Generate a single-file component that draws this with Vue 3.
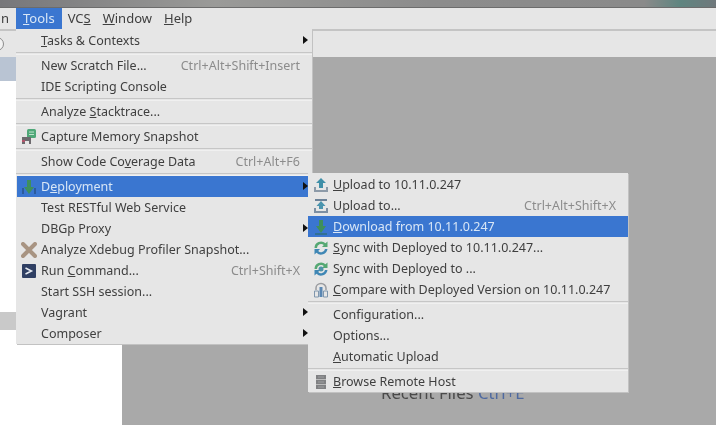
<script setup>
const topMenus = [
  { pre: '', key: 'T', post: 'ools', active: true },
  { pre: 'VC', key: 'S', post: '' },
  { pre: '', key: 'W', post: 'indow' },
  { pre: '', key: 'H', post: 'elp' }
]

const toolsMenu = [
  { pre: '', key: 'T', post: 'asks & Contexts', arrow: true },
  { sep: true },
  { post: 'New Scratch File...', hint: 'Ctrl+Alt+Shift+Insert' },
  { post: 'IDE Scripting Console' },
  { sep: true },
  { pre: 'Analyze ', key: 'S', post: 'tacktrace...' },
  { sep: true },
  { post: 'Capture Memory Snapshot', icon: 'capture' },
  { sep: true },
  { pre: 'Show Code Co', key: 'v', post: 'erage Data', hint: 'Ctrl+Alt+F6' },
  { sep: true },
  { pre: 'D', key: 'e', post: 'ployment', icon: 'deploy', arrow: true, active: true },
  { post: 'Test RESTful Web Service' },
  { post: 'DBGp Proxy', arrow: true },
  { post: 'Analyze Xdebug Profiler Snapshot...', icon: 'xdebug' },
  { pre: 'Run ', key: 'C', post: 'ommand...', icon: 'run', hint: 'Ctrl+Shift+X' },
  { post: 'Start SSH session...' },
  { post: 'Vagrant', arrow: true },
  { post: 'Composer', arrow: true }
]

const deployMenu = [
  { pre: '', key: 'U', post: 'pload to 10.11.0.247', icon: 'upload' },
  { post: 'Upload to...', icon: 'uploadTo', hint: 'Ctrl+Alt+Shift+X' },
  { pre: '', key: 'D', post: 'ownload from 10.11.0.247', icon: 'download', active: true },
  { pre: '', key: 'S', post: 'ync with Deployed to 10.11.0.247...', icon: 'sync' },
  { post: 'Sync with Deployed to ...', icon: 'sync2' },
  { pre: '', key: 'C', post: 'ompare with Deployed Version on 10.11.0.247', icon: 'compare' },
  { sep: true },
  { post: 'Configuration...' },
  { post: 'Options...' },
  { pre: '', key: 'A', post: 'utomatic Upload' },
  { sep: true },
  { pre: '', key: 'B', post: 'rowse Remote Host', icon: 'server' }
]

const menus = [
  { id: 'tools', items: toolsMenu },
  { id: 'deploy', items: deployMenu }
]
</script>

<template>
  <div class="screen">
    <div class="title-strip"></div>
    <div class="menubar">
      <span class="cut">n</span>
      <span v-for="m in topMenus" :key="m.pre + m.post" class="top-item" :class="{ active: m.active }">{{ m.pre }}<u>{{ m.key }}</u>{{ m.post }}</span>
    </div>
    <div class="toolbar"><span class="round-btn"></span></div>
    <div class="body">
      <div class="left-panel">
        <div class="panel-head"></div>
        <div class="panel-white"></div>
        <div class="panel-tab"></div>
      </div>
      <div class="editor">
        <div class="recent">Recent Files <span class="shortcut">Ctrl+E</span></div>
      </div>
    </div>

    <div v-for="menu in menus" :key="menu.id" class="menu" :class="menu.id">
      <template v-for="(item, i) in menu.items" :key="i">
        <div v-if="item.sep" class="sep"></div>
        <div v-else class="row" :class="{ active: item.active }">
          <span class="icon">
            <svg v-if="item.icon === 'capture'" width="16" height="16" viewBox="0 0 16 16">
              <rect x="6" y="0" width="9" height="9" rx="1.5" fill="#4fa878" />
              <path d="M8 3h5M8 5.500h5" stroke="#bfe3cd" />
              <path d="M1 8h9v7H8v-3H4v3H1z" fill="#6d6a6e" />
              <rect x="1" y="11" width="3" height="2" fill="#b0546a" />
            </svg>
            <svg v-else-if="item.icon === 'deploy'" width="16" height="16" viewBox="0 0 16 16">
              <path d="M2 9v6M14 9v6" stroke="#2c5c9c" stroke-width="2" />
              <path d="M6 1h4v7h3l-5 7-5-7h3z" fill="#3f8f5c" />
            </svg>
            <svg v-else-if="item.icon === 'xdebug'" width="16" height="16" viewBox="0 0 16 16">
              <path d="M2 2l12 12M14 2L2 14" stroke="#a89482" stroke-width="4" stroke-linecap="round" />
            </svg>
            <svg v-else-if="item.icon === 'run'" width="16" height="16" viewBox="0 0 16 16">
              <rect x="1" y="1" width="14" height="14" rx="1" fill="#2f3f63" />
              <path d="M4.500 5l6 3-6 3" fill="none" stroke="#e8ecf2" stroke-width="1.500" />
            </svg>
            <svg v-else-if="item.icon === 'upload'" width="16" height="16" viewBox="0 0 16 16">
              <path d="M8 1l5 5h-3v5H6V6H3z" fill="#3f8fa8" />
              <path d="M1 10v5h14v-5h-2v3H3v-3z" fill="#8c9aa8" />
            </svg>
            <svg v-else-if="item.icon === 'uploadTo'" width="16" height="16" viewBox="0 0 16 16">
              <path d="M2 1h12v2H2z" fill="#6c8298" />
              <path d="M8 3l4.500 5H10v3H6V8H3.500z" fill="#4a94ae" />
              <path d="M1 10v5h14v-5h-2v3H3v-3z" fill="#7d8fa3" />
            </svg>
            <svg v-else-if="item.icon === 'download'" width="16" height="16" viewBox="0 0 16 16">
              <path d="M6 1h4v6h3l-5 7-5-7h3z" fill="#3f8f5c" />
              <path d="M2 15h12" stroke="#2f6f80" stroke-width="1.500" />
            </svg>
            <svg v-else-if="item.icon === 'sync'" width="16" height="16" viewBox="0 0 16 16">
              <path d="M1.500 8A6.500 6.500 0 0 1 12.500 3.300L14.500 1.500V7H9l1.800-1.900A4 4 0 0 0 4 8z" fill="#55a873" />
              <path d="M14.500 9A6.500 6.500 0 0 1 3.500 12.700L1.500 14.500V9H7L5.200 10.900A4 4 0 0 0 12 9z" fill="#3f87b5" />
            </svg>
            <svg v-else-if="item.icon === 'sync2'" width="16" height="16" viewBox="0 0 16 16">
              <path d="M1.500 8A6.500 6.500 0 0 1 12.500 3.300L14.500 1.500V7H9l1.800-1.900A4 4 0 0 0 4 8z" fill="#55a873" />
              <path d="M14.500 9A6.500 6.500 0 0 1 3.500 12.700L1.500 14.500V9H7L5.200 10.900A4 4 0 0 0 12 9z" fill="#3f87b5" />
              <circle cx="8" cy="8" r="2.500" fill="#4f93a8" />
            </svg>
            <svg v-else-if="item.icon === 'compare'" width="16" height="16" viewBox="0 0 16 16">
              <path d="M3 8V6a5 4.500 0 0 1 10 0v2" fill="none" stroke="#9a9ca0" stroke-width="1.500" />
              <path d="M1.500 9h4v6h-4zM10.500 9h4v6h-4z" fill="none" stroke="#7f96ad" />
              <rect x="6.500" y="5" width="3" height="10" fill="#5a87b3" />
            </svg>
            <svg v-else-if="item.icon === 'server'" width="16" height="16" viewBox="0 0 16 16">
              <rect x="3" y="1" width="10" height="14" fill="#808183" />
              <path d="M3 5.500h10M3 10.500h10" stroke="#bcbcbc" />
              <path d="M5 3h6M5 8h6M5 13h6" stroke="#9c9d9f" />
            </svg>
          </span>
          <span class="label">{{ item.pre }}<u v-if="item.key">{{ item.key }}</u>{{ item.post }}</span>
          <span v-if="item.hint" class="hint">{{ item.hint }}</span>
          <span v-if="item.arrow" class="arrow"></span>
        </div>
      </template>
    </div>
  </div>
</template>

<style scoped>
.screen {
  position: relative;
  width: 716px;
  height: 425px;
  overflow: hidden;
  display: flex;
  flex-direction: column;
  background: #a9a9a9;
  font-family: "Noto Sans", "Open Sans", sans-serif;
  font-size: 12.500px;
  color: #3f3f3f;
  filter: blur(0.6px);
}

.title-strip {
  height: 8px;
  background: linear-gradient(90deg, #77777a 0%, #9a9a98 30%, #8c8c8c 60%, #8a8a8a 90%, #5f8580 95%, #70787c 100%);
  border-bottom: 1px solid #6c6c6c;
  box-sizing: border-box;
}

.menubar {
  height: 21px;
  display: flex;
  align-items: stretch;
  background: #e6e6e6;
  font-size: 13px;
  line-height: 21px;
}
.cut {
  width: 15px;
  padding-left: 1px;
  flex: none;
}
.top-item {
  padding: 0 6px;
}
.top-item.active {
  padding: 0 7px;
  background: #3a76d0;
  color: #d8e6f6;
}

.toolbar {
  height: 28px;
  background: #e6e6e6;
  border-top: 2px solid #c4c4c4;
  box-sizing: border-box;
  position: relative;
}
.round-btn {
  position: absolute;
  left: -10px;
  top: 6px;
  width: 12px;
  height: 12px;
  border: 1px solid #8b8b8b;
  border-radius: 50%;
  background: #f2f2f2;
}

.body {
  flex: 1;
  display: flex;
}
.left-panel {
  width: 122px;
  display: flex;
  flex-direction: column;
  background: #fff;
}
.panel-head {
  height: 24px;
  background: #b9c4d3;
}
.panel-white {
  height: 231px;
}
.panel-tab {
  height: 18px;
  background: #c9c9c9;
}
.editor {
  flex: 1;
  padding: 326px 0 0 259px;
  background: #a9a9a9;
}
.recent {
  font-size: 16.700px;
  line-height: 20px;
  color: #4a4a4a;
  white-space: nowrap;
}
.shortcut {
  color: #4f6aa0;
}

.menu {
  position: absolute;
  z-index: 1;
  display: flex;
  flex-direction: column;
  background: #e6e6e6;
  box-shadow: 1px 1px 0 #c2c2c2;
}
.menu.tools {
  left: 16px;
  top: 29px;
  width: 296px;
  padding-top: 1px;
}
.menu.deploy {
  left: 308px;
  top: 173px;
  width: 320px;
  padding-top: 1px;
}

.row {
  position: relative;
  height: 21px;
  display: flex;
  align-items: center;
  padding: 0 12px 0 5px;
  white-space: nowrap;
}
.row.active {
  background: #3a76d0;
  color: #d8e6f6;
}
.tools .row.active {
  margin-left: 1px;
  padding-left: 4px;
}
.icon {
  width: 16px;
  height: 16px;
  margin-right: 4px;
  flex: none;
}
.icon svg {
  display: block;
}
.label {
  flex: 1;
}
.hint {
  color: #8c8c8c;
}
.arrow {
  position: absolute;
  right: 4px;
  top: 6px;
  border-left: 5px solid #111;
  border-top: 4.500px solid transparent;
  border-bottom: 4.500px solid transparent;
}
.sep {
  height: 3px;
  border-top: 1px solid #c6c6c6;
  border-bottom: 1px solid #f0f0f0;
  box-sizing: border-box;
  margin-top: 1px;
}
</style>

<style>
html, body {
  margin: 0;
  background: #a9a9a9;
}
</style>
